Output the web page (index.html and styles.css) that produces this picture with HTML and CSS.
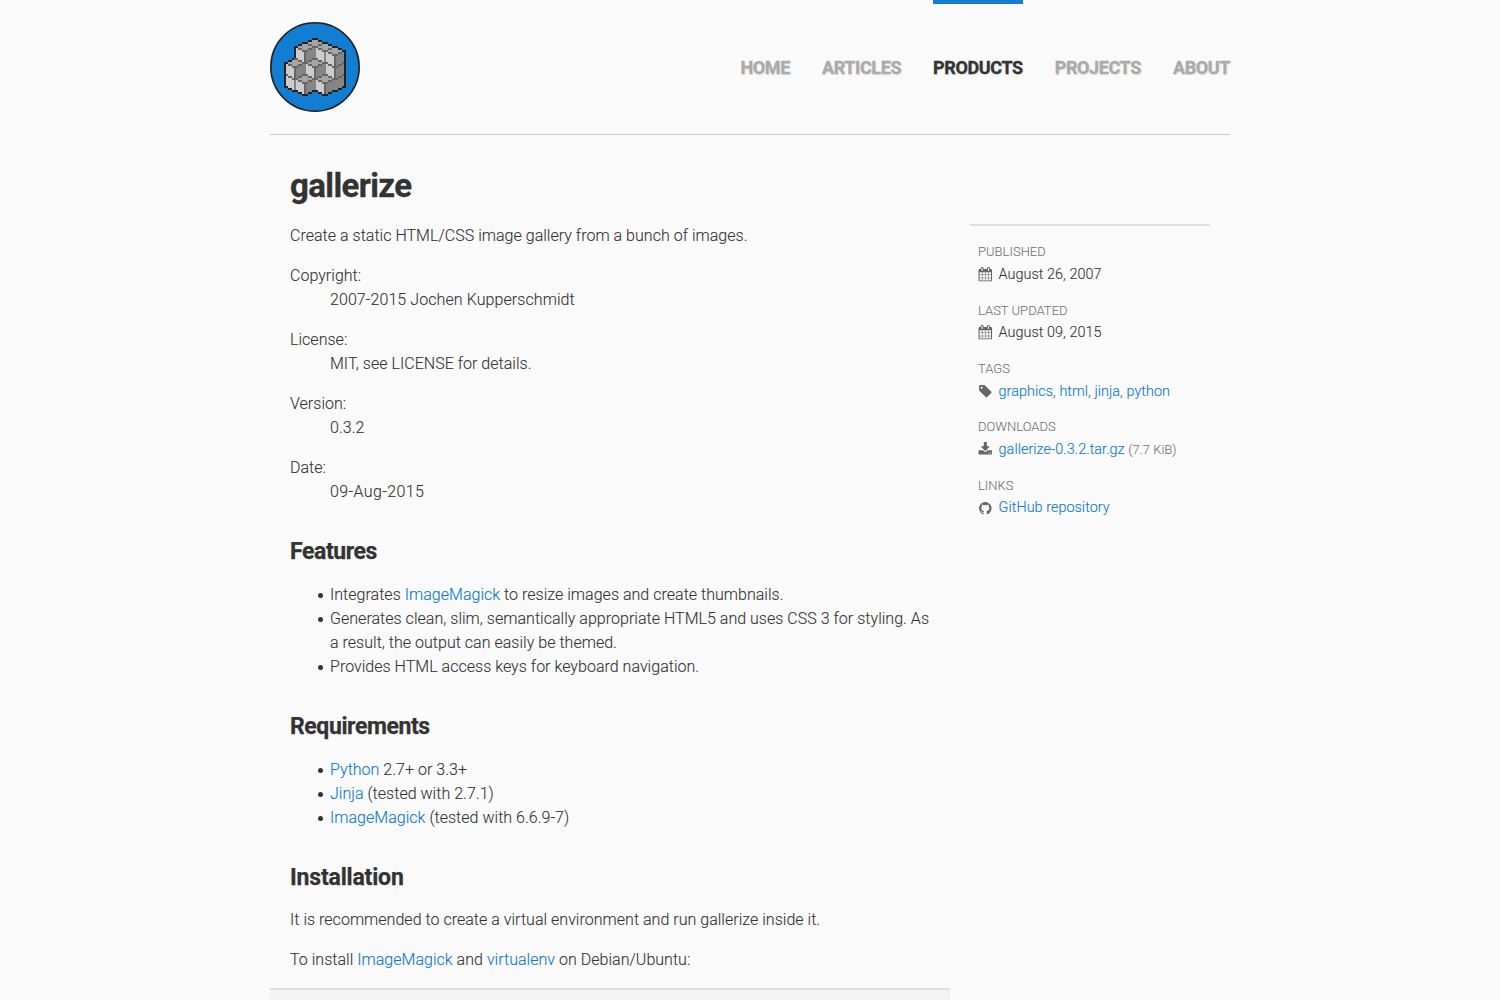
FILE: index.html
```html
<!DOCTYPE html>
<html lang="en">
<head>
<meta charset="utf-8">
<title>gallerize</title>
<link rel="stylesheet" href="styles.css">
</head>
<body>
<svg class="defs" width="0" height="0">
  <symbol id="calendar" viewBox="-64 -1536 1792 1792"><path transform="scale(1,-1)" d="M128 -128h288v288h-288v-288zM480 -128h320v288h-320v-288zM128 224h288v320h-288v-320zM480 224h320v320h-320v-320zM128 608h288v288h-288v-288zM864 -128h320v288h-320v-288zM480 608h320v288h-320v-288zM1248 -128h288v288h-288v-288zM864 224h320v320h-320v-320zM512 1088v288q0 13 -9.5 22.5t-22.5 9.5h-64q-13 0 -22.5 -9.5t-9.5 -22.5v-288q0 -13 9.5 -22.5t22.5 -9.5h64q13 0 22.5 9.5t9.5 22.5zM1248 224h288v320h-288v-320zM864 608h320v288h-320v-288zM1248 608h288v288h-288v-288zM1280 1088v288q0 13 -9.5 22.5t-22.5 9.5h-64q-13 0 -22.5 -9.5t-9.5 -22.5v-288q0 -13 9.5 -22.5t22.5 -9.5h64q13 0 22.5 9.5t9.5 22.5zM1664 1152v-1280q0 -52 -38 -90t-90 -38h-1408q-52 0 -90 38t-38 90v1280q0 52 38 90t90 38h128v96q0 66 47 113t113 47h64q66 0 113 -47t47 -113v-96h384v96q0 66 47 113t113 47h64q66 0 113 -47t47 -113v-96h128q52 0 90 -38t38 -90z"/></symbol>
  <symbol id="tag" viewBox="-138 -1536 1792 1792"><path transform="scale(1,-1)" d="M448 1088q0 53 -37.5 90.5t-90.5 37.5t-90.5 -37.5t-37.5 -90.5t37.5 -90.5t90.5 -37.5t90.5 37.5t37.5 90.5zM1515 512q0 -53 -37 -90l-491 -492q-39 -37 -91 -37q-53 0 -90 37l-715 716q-38 37 -64.5 101t-26.5 117v416q0 52 38 90t90 38h416q53 0 117 -26.5t102 -64.5l715 -714q37 -39 37 -91z"/></symbol>
  <symbol id="download" viewBox="-64 -1536 1792 1792"><path transform="scale(1,-1)" d="M1280 192q0 26 -19 45t-45 19t-45 -19t-19 -45t19 -45t45 -19t45 19t19 45zM1536 192q0 26 -19 45t-45 19t-45 -19t-19 -45t19 -45t45 -19t45 19t19 45zM1664 416v-320q0 -40 -28 -68t-68 -28h-1472q-40 0 -68 28t-28 68v320q0 40 28 68t68 28h465l135 -136q58 -56 136 -56t136 56l136 136h464q40 0 68 -28t28 -68zM1339 985q17 -41 -14 -70l-448 -448q-18 -19 -45 -19t-45 19l-448 448q-31 29 -14 70q17 39 59 39h256v448q0 26 19 45t45 19h256q26 0 45 -19t19 -45v-448h256q42 0 59 -39z"/></symbol>
  <symbol id="github" viewBox="-128 -1536 1792 1792"><path transform="scale(1,-1)" d="M768 1408q209 0 385.5 -103t279.5 -279.5t103 -385.5q0 -251 -146.5 -451.5t-378.5 -277.5q-27 -5 -40 7t-13 30q0 3 0.5 76.5t0.5 134.5q0 97 -52 142q57 6 102.5 18t94 39t81 66.5t53 105t20.5 150.5q0 119 -79 206q37 91 -8 204q-28 9 -81 -11t-92 -44l-38 -24q-93 26 -192 26t-192 -26q-16 11 -42.5 27t-83.5 38.5t-85 13.5q-45 -113 -8 -204q-79 -87 -79 -206q0 -85 20.5 -150t52.5 -105t80.5 -67t94 -39t102.5 -18q-39 -36 -49 -103q-21 -10 -45 -15t-57 -5t-65.5 21.5t-55.5 62.5q-19 32 -48.5 52t-49.5 24l-20 3q-21 0 -29 -4.5t-5 -11.5t9 -14t13 -12l7 -5q22 -10 43.5 -38t31.5 -51l10 -23q13 -38 44 -61.5t67 -30t69.5 -7t55.5 3.5l23 4q0 -38 0.5 -88.5t0.5 -54.5q0 -18 -13 -30t-40 -7q-232 77 -378.5 277.5t-146.5 451.5q0 209 103 385.5t279.5 279.5t385.5 103z"/></symbol>
</svg>
<div class="page">
  <header class="header">
    <a class="logo" href="#"><svg width="90" height="90" viewBox="0 0 90 90"><circle cx="45" cy="45" r="44.2" fill="#127dd1" stroke="#222" stroke-width="1.6"/><g id="cubes" transform="translate(14 16) scale(2)" shape-rendering="crispEdges"></g></svg></a>
    <nav class="nav">
      <a href="#">HOME</a><a href="#">ARTICLES</a><a class="active" href="#">PRODUCTS</a><a href="#">PROJECTS</a><a href="#">ABOUT</a>
    </nav>
  </header>
  <div class="columns">
    <main class="main">
      <h1>gallerize</h1>
      <p>Create a static HTML/CSS image gallery from a bunch of images.</p>
      <dl>
        <dt>Copyright:</dt><dd class="digits">2007-2015 Jochen Kupperschmidt</dd>
        <dt>License:</dt><dd>MIT, see LICENSE for details.</dd>
        <dt>Version:</dt><dd>0.3.2</dd>
        <dt>Date:</dt><dd class="stamp">09-Aug-2015</dd>
      </dl>
      <h2>Features</h2>
      <ul>
        <li>Integrates <a href="#">ImageMagick</a> to resize images and create thumbnails.</li>
        <li>Generates clean, slim, semantically appropriate HTML5 and uses CSS 3 for styling. As<br>a result, the output can easily be themed.</li>
        <li>Provides HTML access keys for keyboard navigation.</li>
      </ul>
      <h2>Requirements</h2>
      <ul>
        <li><a href="#">Python</a> 2.7+ or 3.3+</li>
        <li><a href="#">Jinja</a> (tested with 2.7.1)</li>
        <li><a href="#">ImageMagick</a> (tested with 6.6.9-7)</li>
      </ul>
      <h2 class="tight">Installation</h2>
      <p>It is recommended to create a virtual environment and run gallerize inside it.</p>
      <p>To install <a href="#">ImageMagick</a> and <a href="#">virtualenv</a> on Debian/Ubuntu:</p>
      <div class="code"></div>
    </main>
    <aside class="meta">
      <section><h3>PUBLISHED</h3><div class="row"><svg class="icon"><use href="#calendar"/></svg><span class="date">August 26, 2007</span></div></section>
      <section><h3>LAST UPDATED</h3><div class="row"><svg class="icon"><use href="#calendar"/></svg><span class="date">August 09, 2015</span></div></section>
      <section><h3>TAGS</h3><div class="row"><svg class="icon"><use href="#tag"/></svg><span><a href="#">graphics</a>, <a href="#">html</a>, <a href="#">jinja</a>, <a href="#">python</a></span></div></section>
      <section><h3>DOWNLOADS</h3><div class="row"><svg class="icon"><use href="#download"/></svg><span><a href="#">gallerize-0.3.2.tar.gz</a> <small>(7.7 KiB)</small></span></div></section>
      <section><h3>LINKS</h3><div class="row"><svg class="icon"><use href="#github"/></svg><span><a href="#">GitHub repository</a></span></div></section>
    </aside>
  </div>
</div>
<script src="logo.js"></script>
</body>
</html>
```
FILE: styles.css
```css
* { box-sizing: border-box; }
html { overflow: hidden; }
body { margin: 0; height: 1000px; overflow: hidden; background: #fafafa; color: #333; font: 300 16px/24px Roboto, sans-serif; letter-spacing: .024px; -webkit-text-stroke: .1px; }
a { color: #0a78d0; text-decoration: none; }
.defs { position: absolute; }
.page { width: 960px; margin: 0 auto; }
.header { display: flex; justify-content: space-between; height: 135px; border-bottom: 1px solid #ccc; }
.logo { display: block; height: 90px; margin-top: 22px; }
.logo svg { display: block; }
.nav { display: flex; gap: 32px; }
.nav a { height: 100px; padding-top: 52px; border-top: 4px solid transparent; color: #aaa; font-size: 18px; font-weight: 700; letter-spacing: -.39px; -webkit-text-stroke: .3px; text-shadow: 1px 1px 2px rgba(0, 0, 0, .1); }
.nav .active { color: #333; border-color: #127dd1; }
.columns { display: flex; gap: 20px; }
.main { width: 680px; padding: 31px 20px 0; }
h1 { margin: 0 0 18px; font-size: 33px; line-height: 40px; font-weight: 700; letter-spacing: -.62px; -webkit-text-stroke: .3px; }
p { margin: 0 0 16px; }
dl { margin: 0; }
dd { margin: 0 0 16px 40px; }
.digits { letter-spacing: .08px; }
.stamp { letter-spacing: .38px; }
h2 { margin: 32px 0 16px; font-size: 23px; line-height: 31px; font-weight: 700; letter-spacing: -.4px; -webkit-text-stroke: .25px; }
h2.tight { margin-bottom: 15px; letter-spacing: -.18px; }
ul { margin: 0; padding-left: 40px; list-style: none; }
li::before { content: ""; display: inline-block; width: 5px; height: 5px; margin: 0 7px 2px -12px; border-radius: 50%; background: #333; }
.code { height: 60px; margin: 0 -20px; border-top: 2px solid #ddd; background: #f3f3f3; }
.meta { width: 240px; height: 310px; margin-top: 89px; padding: 16.2px 8px 0; border-top: 2px solid #e1e1e1; font-size: 14.4px; color: #666; letter-spacing: .04px; }
.meta section { height: 58.4px; }
h3 { margin: 0; font-size: 12.96px; line-height: 20px; font-weight: 300; color: #777; }
.row { display: flex; align-items: center; gap: 6px; height: 25.4px; white-space: nowrap; }
.date { color: #333; }
.icon { width: 14.6px; height: 14.6px; margin-bottom: 1px; fill: #666; }
small { font-size: 12.96px; color: #777; }
```
FILE: logo.js
```js
// Isometric cube sprite: l/t/d are the lit, top and shaded faces, e the edges.
const sprite = [
  "....eee....",
  "..eetttee..",
  "eetttttttee",
  "dleettteedd",
  "dllleeedddd",
  "dlllleddddd",
  "dlllleddddd",
  "dlllleddddd",
  "eellledddee",
  "..eeledee..",
  "....eee...."
];
const colors = { e: "#666", l: "#ccc", t: "#a5a5a5", d: "#858585", o: "#222" };
// Back to front: centre column and top row of each cube.
const cubes = [[15, 0], [10, 2], [20, 2], [25, 16], [25, 10], [25, 4],
  [15, 16], [15, 10], [5, 16], [5, 10], [10, 18], [20, 18]];
const grid = Array.from({ length: 29 }, () => Array(31).fill("."));
for (const [cx, top] of cubes) {
  sprite.forEach((row, y) => {
    for (let x = 0; x < 11; x++) {
      if (row[x] !== ".") grid[top + y][cx - 5 + x] = row[x];
    }
  });
}
const empty = (x, y) => !grid[y] || !grid[y][x] || grid[y][x] === ".";
let out = "";
grid.forEach((row, y) => row.forEach((cell, x) => {
  if (cell === ".") return;
  const edge = empty(x - 1, y) || empty(x + 1, y) || empty(x, y - 1) || empty(x, y + 1);
  out += `<rect x="${x}" y="${y}" width="1" height="1" fill="${colors[edge ? "o" : cell]}"/>`;
}));
document.getElementById("cubes").innerHTML = out;
```
